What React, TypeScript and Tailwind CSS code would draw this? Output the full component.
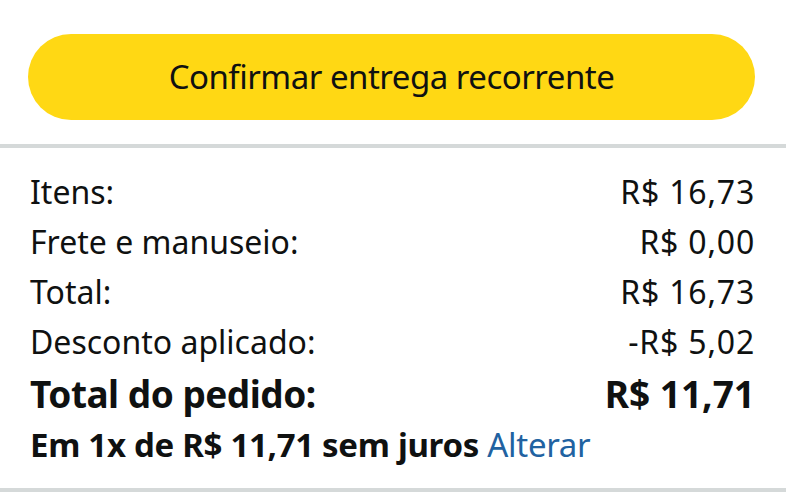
import React from "react";

const rows = [
  ["Itens:", "R$ 16,73"],
  ["Frete e manuseio:", "R$ 0,00"],
  ["Total:", "R$ 16,73"],
  ["Desconto aplicado:", "-R$ 5,02"],
];

export default function App() {
  return (
    <div className="w-[786px] h-[500px] bg-white overflow-hidden text-[#0F1111]" style={{ fontFamily: '"Noto Sans", "Open Sans", sans-serif' }}>
      <div className="pl-[28px] pt-[34px] pb-[24px] pr-[31px]">
        <button className="w-full h-[86px] rounded-full bg-[#FFD814] flex items-center justify-center text-[33px] tracking-[-0.5px]">
          Confirmar entrega recorrente
        </button>
      </div>
      <div className="h-[4px] bg-[#D5D9D9]" />
      <div className="pl-[30px] pr-[31px] pt-[19px]">
        {rows.map(([l, v]) => (
          <div key={l} className="flex justify-between h-[50px] items-center text-[32px]">
            <span>{l}</span>
            <span className="tracking-[0.8px]">{v}</span>
          </div>
        ))}
        <div className="flex justify-between h-[54px] items-center text-[37px] font-bold tracking-[-0.5px]">
          <span>Total do pedido:</span>
          <span className="tracking-[0px]">R$ 11,71</span>
        </div>
        <div className="h-[48px] flex items-center text-[33px] font-bold tracking-[-0.3px]">
          <span>Em 1x de R$ 11,71 sem juros <span className="font-normal text-[#2162A1]">Alterar</span></span>
        </div>
      </div>
      <div className="mt-[19px] h-[4px] bg-[#D5D9D9]" />
    </div>
  );
}
